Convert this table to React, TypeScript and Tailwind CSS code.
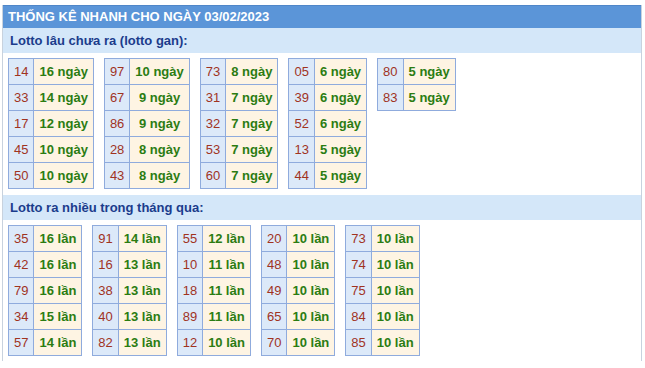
const gan: [string, string][][] = [
  [['14', '16 ngày'], ['33', '14 ngày'], ['17', '12 ngày'], ['45', '10 ngày'], ['50', '10 ngày']],
  [['97', '10 ngày'], ['67', '9 ngày'], ['86', '9 ngày'], ['28', '8 ngày'], ['43', '8 ngày']],
  [['73', '8 ngày'], ['31', '7 ngày'], ['32', '7 ngày'], ['53', '7 ngày'], ['60', '7 ngày']],
  [['05', '6 ngày'], ['39', '6 ngày'], ['52', '6 ngày'], ['13', '5 ngày'], ['44', '5 ngày']],
  [['80', '5 ngày'], ['83', '5 ngày']],
];

const nhieu: [string, string][][] = [
  [['35', '16 lần'], ['42', '16 lần'], ['79', '16 lần'], ['34', '15 lần'], ['57', '14 lần']],
  [['91', '14 lần'], ['16', '13 lần'], ['38', '13 lần'], ['40', '13 lần'], ['82', '13 lần']],
  [['55', '12 lần'], ['10', '11 lần'], ['18', '11 lần'], ['89', '11 lần'], ['12', '10 lần']],
  [['20', '10 lần'], ['48', '10 lần'], ['49', '10 lần'], ['65', '10 lần'], ['70', '10 lần']],
  [['73', '10 lần'], ['74', '10 lần'], ['75', '10 lần'], ['84', '10 lần'], ['85', '10 lần']],
];

function LotoTable({ rows }: { rows: [string, string][] }) {
  return (
    <table className="border-collapse">
      <tbody>
        {rows.map(([num, val]) => (
          <tr key={num}>
            <td className="h-[26px] border border-[#8fabdd] bg-[#dce9f9] px-[5px] text-center text-[13px] text-[#a0331f]">{num}</td>
            <td className="h-[26px] border border-[#8fabdd] bg-[#fef4e3] px-[5px] text-center text-[13px] font-bold text-[#2b7c12]">{val}</td>
          </tr>
        ))}
      </tbody>
    </table>
  );
}

function SubHeader({ children }: { children: string }) {
  return (
    <div className="flex h-[25px] items-center bg-[#d4e7f9] pl-[7px] text-[13px] font-bold text-[#1b3c8c]">{children}</div>
  );
}

export default function App() {
  return (
    <div className="min-h-[368px] bg-white pt-[5px] pl-[2px] font-['Liberation_Sans',Arial,sans-serif]">
      <div className="w-[640px] border-x border-[#c8d2de] pb-[5px]">
        <div className="flex h-[23px] items-center border-t border-[#4f86c8] bg-[#5b95d8] pl-[5px] text-[13px] font-bold text-white">
          THỐNG KÊ NHANH CHO NGÀY 03/02/2023
        </div>
        <SubHeader>Lotto lâu chưa ra (lotto gan):</SubHeader>
        <div className="flex items-start gap-[10px] px-[5px] pt-[5px] pb-[6px]">
          {gan.map((rows, i) => (
            <LotoTable key={i} rows={rows} />
          ))}
        </div>
        <SubHeader>Lotto ra nhiều trong tháng qua:</SubHeader>
        <div className="flex items-start gap-[10px] px-[5px] pt-[5px]">
          {nhieu.map((rows, i) => (
            <LotoTable key={i} rows={rows} />
          ))}
        </div>
      </div>
    </div>
  );
}
